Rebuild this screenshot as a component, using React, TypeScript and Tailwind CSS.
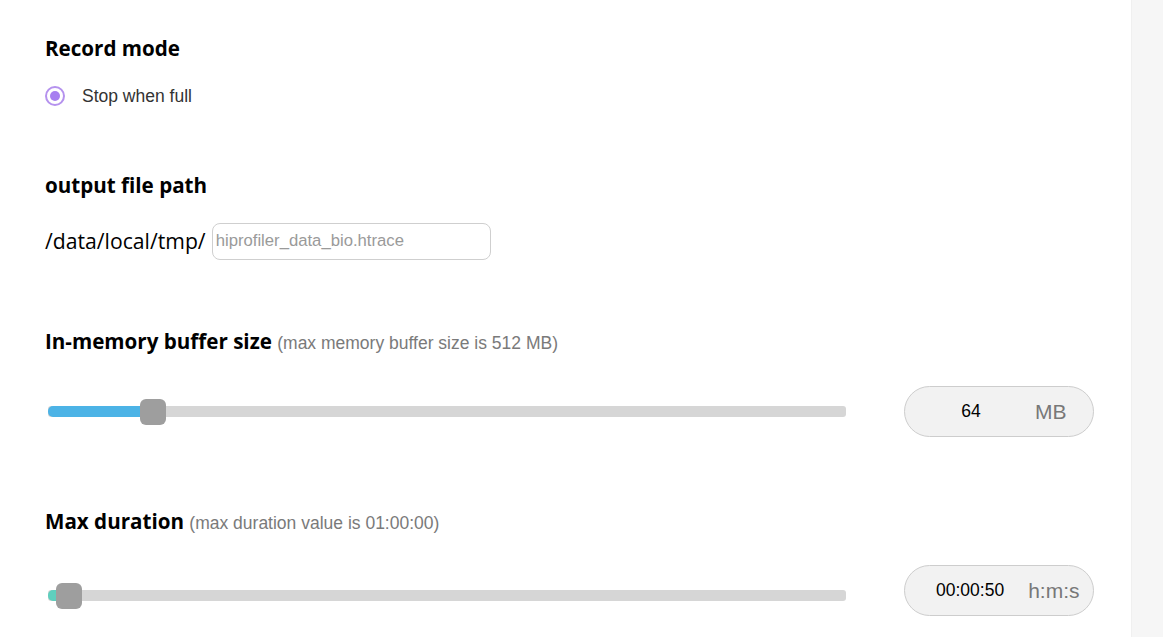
import React from "react";

const heading = "font-['Open_Sans',sans-serif] font-bold text-[20.6px] leading-[28px] text-black";
const arial = "font-['Liberation_Sans',Arial,sans-serif]";

function Slider({ pct, fill, thumbLeft }: { pct: number; fill: string; thumbLeft: number }) {
  return (
    <div className="relative w-[798px] h-[11px] rounded-[3px] bg-[#d6d6d6]">
      <div className={`absolute left-0 top-0 h-full rounded-l-[5px] ${fill}`} style={{ width: `${pct}px` }} />
      <div
        className="absolute top-1/2 -translate-y-1/2 w-[26px] h-[26px] rounded-[6px] bg-[#9e9e9e]"
        style={{ left: `${thumbLeft}px` }}
      />
    </div>
  );
}

export default function App() {
  return (
    <div className="flex w-[1163px] h-[637px] overflow-hidden bg-white">
      <main className="flex-1 pl-[45px] pt-[34px]">
        {/* Record mode */}
        <h2 className={heading}>Record mode</h2>
        <label className="mt-[24px] flex items-center h-[20px]">
          <span className="w-[20px] h-[20px] rounded-full border-2 border-[#b592ee] flex items-center justify-center">
            <span className="w-[10px] h-[10px] rounded-full bg-[#a77ff0]" />
          </span>
          <span className={`${arial} ml-[17px] text-[17.5px] text-[#333]`}>Stop when full</span>
        </label>

        {/* output file path */}
        <h2 className={`${heading} mt-[65px]`}>output file path</h2>
        <div className="mt-[24px] flex items-center h-[36px]">
          <span className="font-['Open_Sans',sans-serif] text-[21.2px] text-black">/data/local/tmp/</span>
          <input
            className={`${arial} ml-[6px] w-[279px] h-[37px] rounded-[8px] border border-[#cfcfcf] px-[3px] text-[16.7px] text-[#333] placeholder:text-[#9a9a9a] outline-none`}
            placeholder="hiprofiler_data_bio.htrace"
          />
        </div>

        {/* In-memory buffer size */}
        <h2 className={`${heading} mt-[68px]`}>
          In-memory buffer size{" "}
          <span className={`${arial} font-normal text-[17.5px] text-[#7a7a7a]`}>(max memory buffer size is 512 MB)</span>
        </h2>
        <div className="mt-[29px] flex items-start pl-[3px]">
          <div className="pt-[20px]">
            <Slider pct={104} fill="bg-[#4cb3e6]" thumbLeft={92} />
          </div>
          <div className="ml-[58px] w-[190px] h-[51px] rounded-full border border-[#cdcdcd] bg-[#f2f2f2] flex items-center">
            <span className={`${arial} w-[130px] text-center text-[17.5px] text-black pl-[2px]`}>64</span>
            <span className={`${arial} text-[21px] text-[#787878]`}>MB</span>
          </div>
        </div>

        {/* Max duration */}
        <h2 className={`${heading} mt-[70px]`}>
          Max duration{" "}
          <span className={`${arial} font-normal text-[17.5px] text-[#7a7a7a]`}>(max duration value is 01:00:00)</span>
        </h2>
        <div className="mt-[28px] flex items-start pl-[3px]">
          <div className="pt-[25px]">
            <Slider pct={14} fill="bg-[#5fcfbe]" thumbLeft={8} />
          </div>
          <div className="ml-[58px] w-[190px] h-[51px] rounded-full border border-[#cdcdcd] bg-[#f2f2f2] flex items-center">
            <span className={`${arial} ml-[31px] text-[17.5px] text-black`}>00:00:50</span>
            <span className={`${arial} ml-[24px] text-[21px] text-[#787878]`}>h:m:s</span>
          </div>
        </div>
      </main>
      <aside className="w-[32px] h-full bg-[#f6f6f6] border-l border-[#f0f0f0]" />
    </div>
  );
}
